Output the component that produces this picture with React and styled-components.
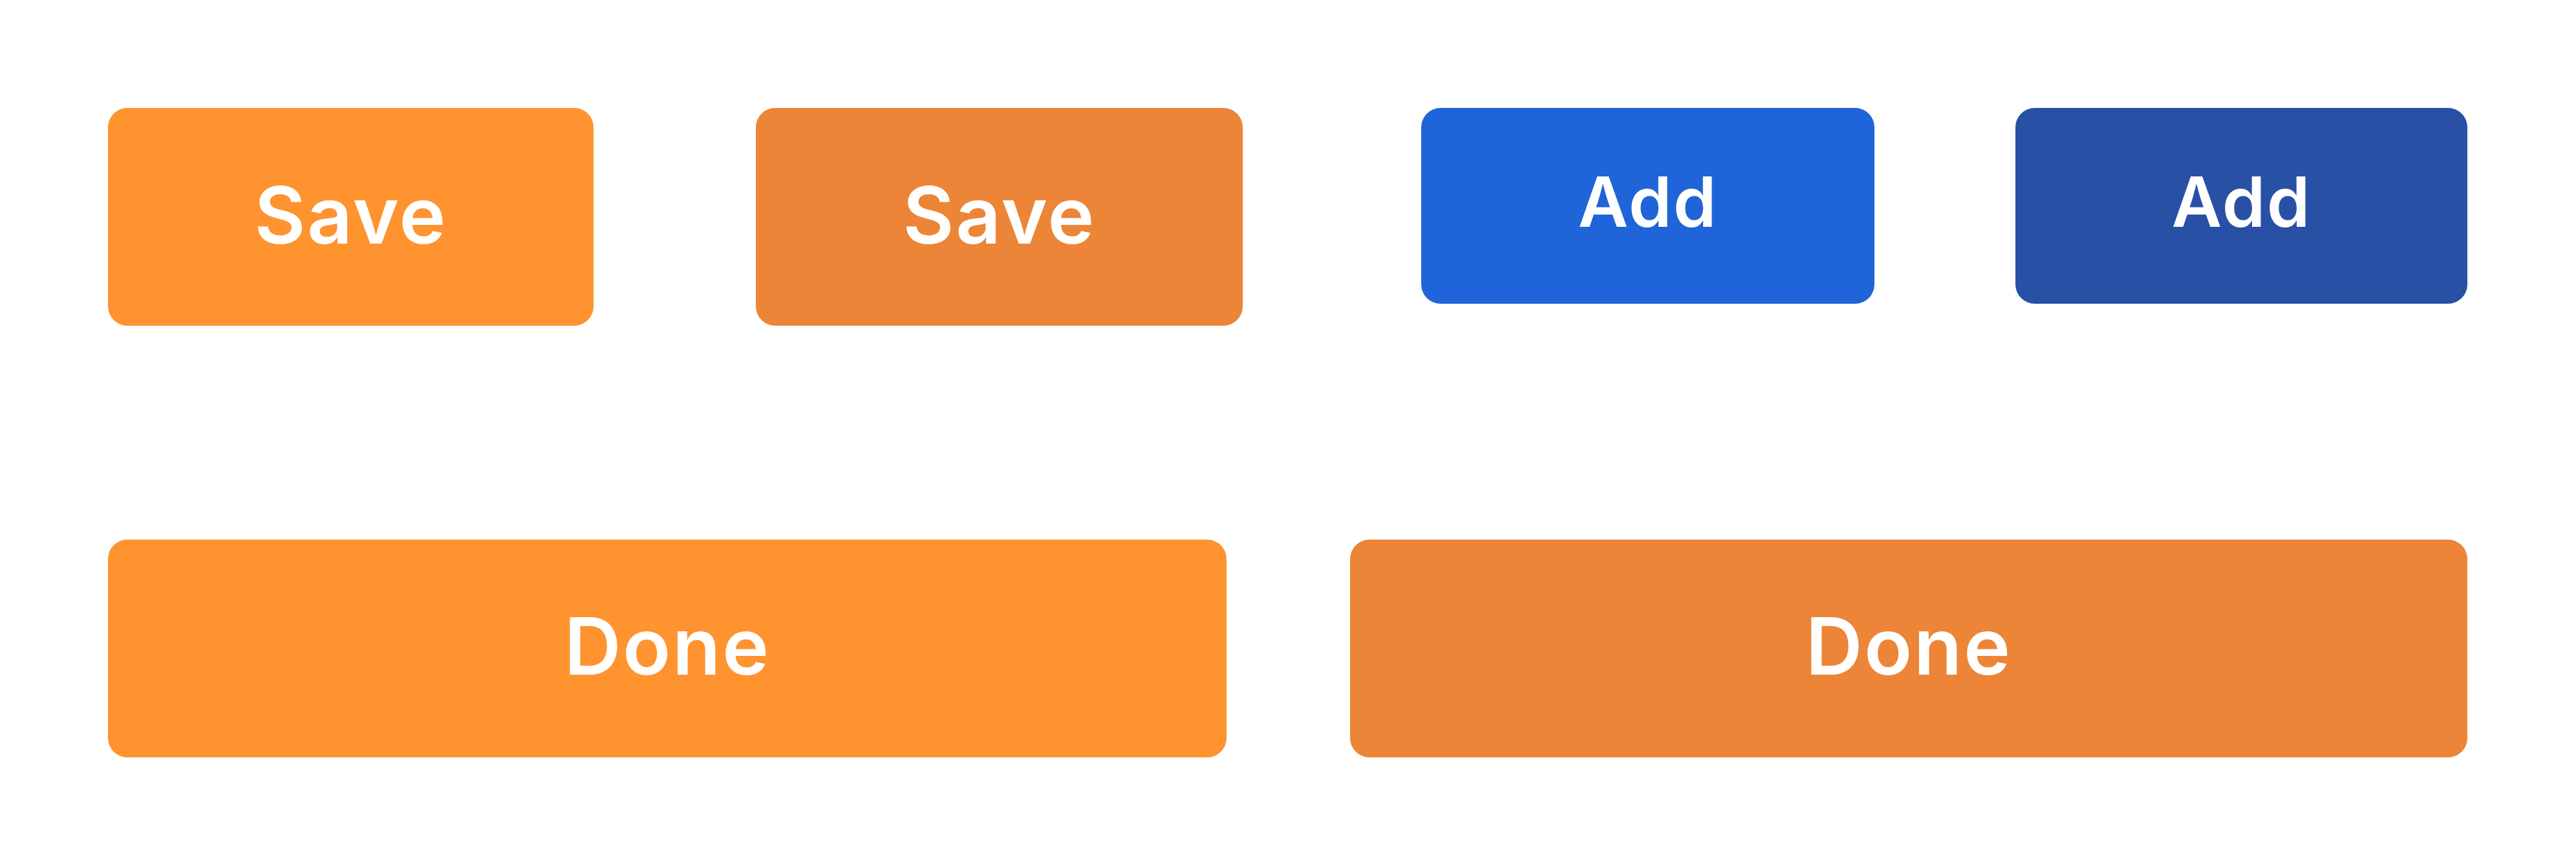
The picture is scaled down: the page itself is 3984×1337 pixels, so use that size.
import React from "react";
import styled, { createGlobalStyle } from "styled-components";

const GlobalStyle = createGlobalStyle`
  html, body {
    margin: 0;
    padding: 0;
    background: #ffffff;
  }
`;

const COLORS = {
  orange: "#fe9330",
  orangeDark: "#ec8537",
  blue: "#1f64d8",
  blueDark: "#2850a5",
};

const App = () => {
  return (
    <>
      <GlobalStyle />
      <Page>
        <TopRow>
          <Group gap={251}>
            <Button color={COLORS.orange} w={751} h={337} size={122}>
              Save
            </Button>
            <Button color={COLORS.orangeDark} w={753} h={337} size={122}>
              Save
            </Button>
          </Group>
          <Group gap={218}>
            <Button color={COLORS.blue} w={701} h={303} size={107} lift={7}>
              Add
            </Button>
            <Button color={COLORS.blueDark} w={699} h={303} size={107} lift={7}>
              Add
            </Button>
          </Group>
        </TopRow>
        <BottomRow>
          <Button color={COLORS.orange} h={337} size={122} lift={4}>
            Done
          </Button>
          <Button color={COLORS.orangeDark} h={337} size={122} lift={4}>
            Done
          </Button>
        </BottomRow>
      </Page>
    </>
  );
};

export default App;

const Page = styled.div`
  box-sizing: border-box;
  width: 3984px;
  height: 1337px;
  padding: 167px 168px 165px 167px;
  display: flex;
  flex-direction: column;
  gap: 331px;
  font-family: Inter, "Open Sans", sans-serif;
`;

const TopRow = styled.div`
  display: flex;
  justify-content: space-between;
  align-items: flex-start;
`;

const Group = styled.div`
  display: flex;
  align-items: flex-start;
  gap: ${(p) => p.gap}px;
`;

const BottomRow = styled.div`
  display: grid;
  grid-template-columns: 1730px 1728px;
  justify-content: space-between;
`;

const Button = styled.button`
  box-sizing: border-box;
  width: ${(p) => (p.w ? `${p.w}px` : "100%")};
  height: ${(p) => p.h}px;
  padding: 0 0 ${(p) => (p.lift || 3) * 2}px 0;
  border: none;
  border-radius: 30px;
  background: ${(p) => p.color};
  color: #ffffff;
  font-family: inherit;
  font-size: ${(p) => p.size}px;
  font-weight: 600;
  letter-spacing: 0.02em;
  display: flex;
  align-items: center;
  justify-content: center;
  cursor: pointer;
`;
